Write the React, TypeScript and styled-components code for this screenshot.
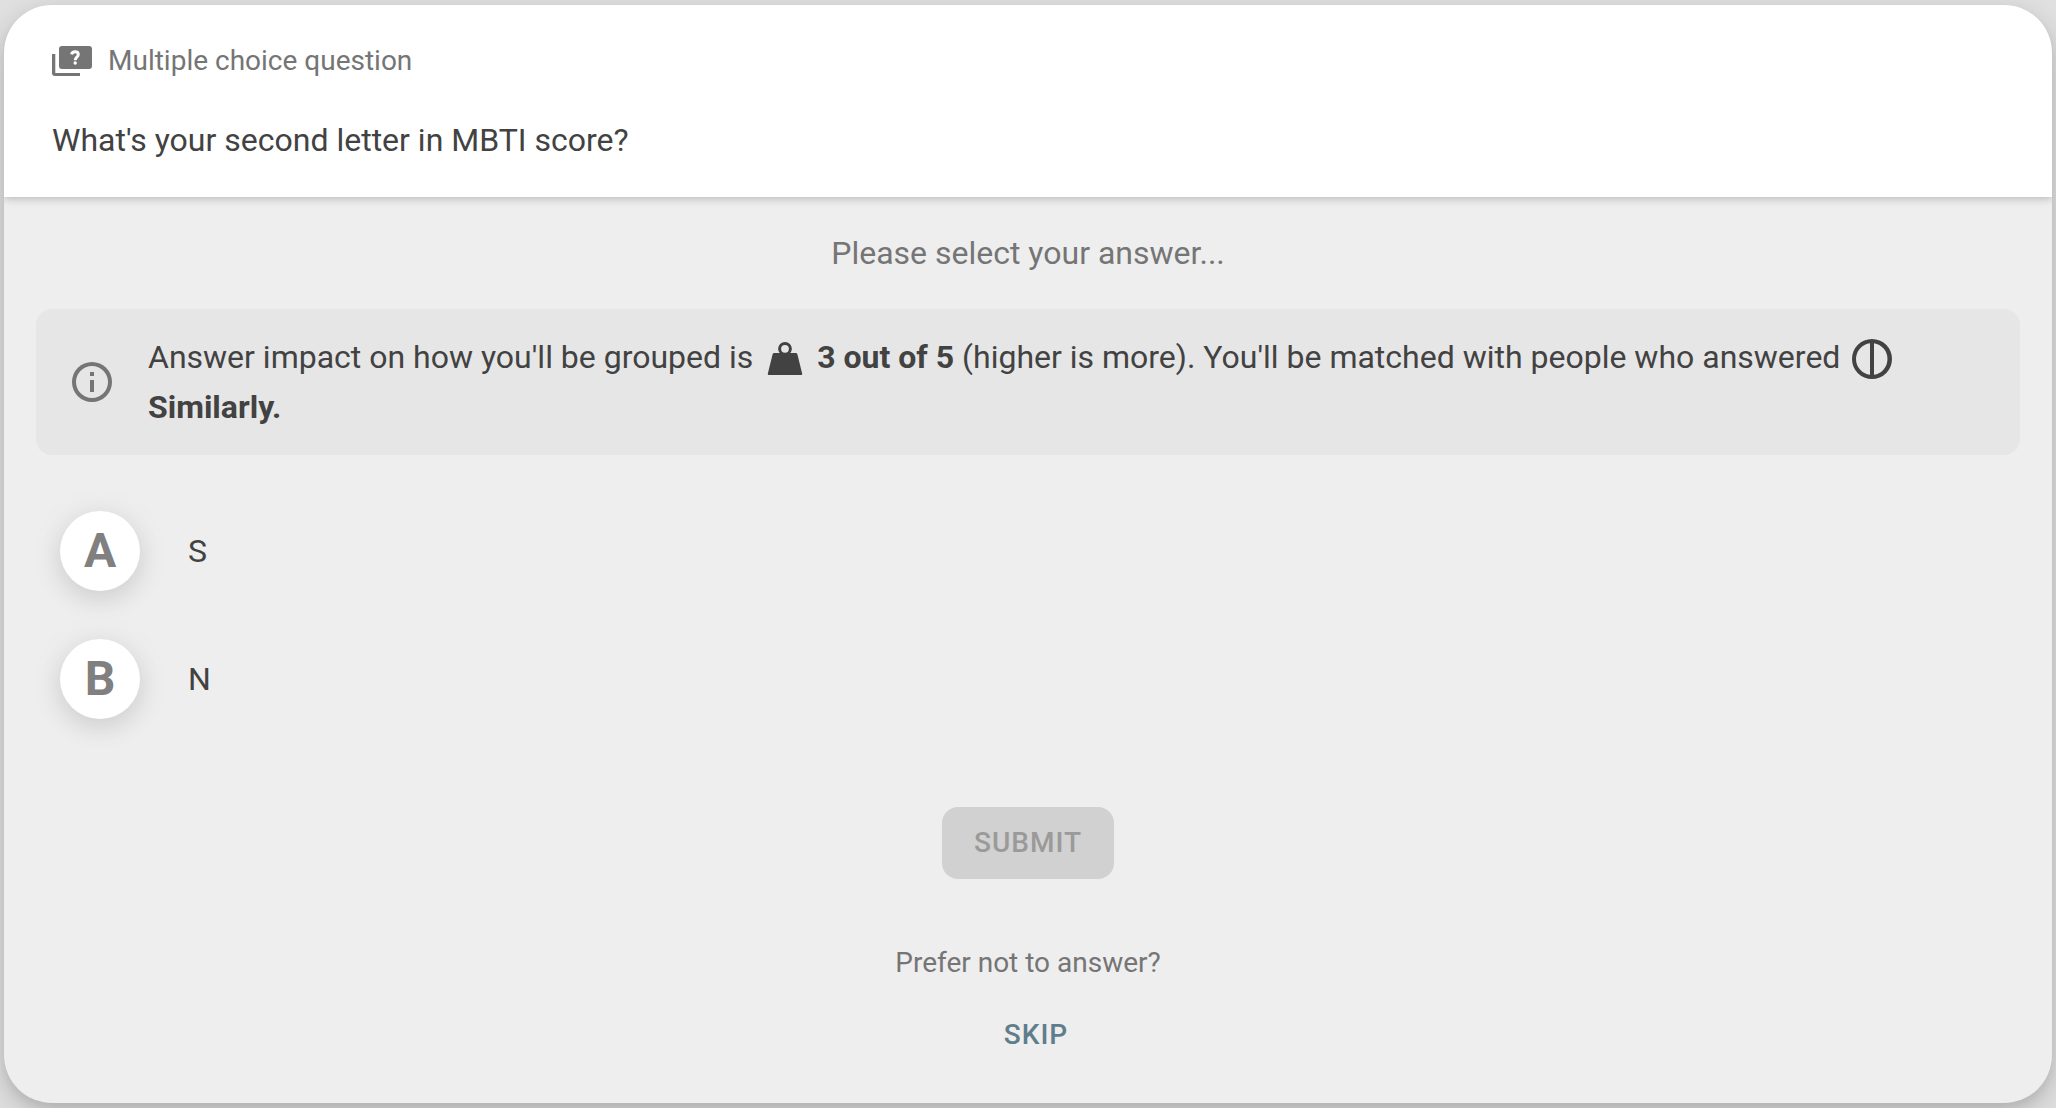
import React, { useState } from "react";
import styled, { createGlobalStyle } from "styled-components";

const GlobalStyle = createGlobalStyle`
  *, *::before, *::after { box-sizing: border-box; }
  body {
    margin: 0;
    background: #e0e0e0;
    color: #424242;
    font: 400 32px/50px Roboto, "Liberation Sans", sans-serif;
  }
`;

const Page = styled.div`
  display: flex;
  min-height: 100vh;
  padding: 5px 4px;
`;

const Card = styled.form`
  display: flex;
  flex: 1;
  flex-direction: column;
  overflow: hidden;
  border-radius: 48px;
  background: #eeeeee;
  box-shadow: 0 10px 28px rgba(0, 0, 0, 0.2), 0 4px 10px rgba(0, 0, 0, 0.05);
`;

const Header = styled.header`
  position: relative;
  display: flex;
  flex-direction: column;
  gap: 30px;
  padding: 32px 48px;
  background: #ffffff;
  box-shadow: 0 2px 8px rgba(0, 0, 0, 0.22);
`;

const Kind = styled.div`
  display: flex;
  align-items: center;
  gap: 16px;
  color: #757575;
  font-size: 28px;
  line-height: 48px;
`;

const Question = styled.h1`
  margin: 0;
  font-size: 32px;
  font-weight: 400;
  line-height: 50px;
`;

const Body = styled.main`
  display: flex;
  flex: 1;
  flex-direction: column;
  padding: 31px 32px 32px;
`;

const Prompt = styled.p`
  margin: 0 0 31px;
  color: #757575;
  text-align: center;
`;

const Notice = styled.aside`
  display: flex;
  align-items: center;
  gap: 32px;
  padding: 23px 32px;
  border-radius: 16px;
  background: #e6e6e6;
`;

const NoticeText = styled.p`
  margin: 0;
`;

const Icon = styled.svg<{ $tone?: string }>`
  flex: none;
  width: 48px;
  height: 48px;
  fill: ${(p) => p.$tone ?? "currentColor"};
`;

const InlineIcon = styled(Icon)`
  margin: -9px 0 -7px;
  vertical-align: middle;
`;

const Options = styled.fieldset`
  display: flex;
  flex-direction: column;
  gap: 48px;
  margin: 56px 24px 88px;
  padding: 0;
  border: 0;
`;

const Option = styled.label`
  display: flex;
  align-items: center;
  gap: 48px;
  cursor: pointer;
`;

const Radio = styled.input`
  position: absolute;
  opacity: 0;
`;

const Letter = styled.span<{ $selected: boolean }>`
  display: grid;
  place-items: center;
  width: 80px;
  height: 80px;
  border-radius: 50%;
  background: ${(p) => (p.$selected ? "#607d8b" : "#ffffff")};
  color: ${(p) => (p.$selected ? "#ffffff" : "#808080")};
  box-shadow: 0 8px 24px rgba(0, 0, 0, 0.1), 0 4px 40px rgba(0, 0, 0, 0.06);
  font-size: 48px;
  font-weight: 700;
`;

const Actions = styled.div`
  display: flex;
  flex-direction: column;
  align-items: center;
`;

const Button = styled.button`
  height: 72px;
  padding: 0 32px;
  border: 0;
  border-radius: 16px;
  background: #607d8b;
  color: #ffffff;
  font: 500 28px/40px Roboto, "Liberation Sans", sans-serif;
  letter-spacing: 1px;
  text-transform: uppercase;

  &:disabled {
    background: #d1d1d1;
    color: #9a9a9a;
  }
`;

const TextButton = styled(Button)`
  margin-left: 16px;
  background: transparent;
  color: #607d8b;
`;

const Decline = styled.p`
  margin: 61px 0 13px;
  color: #757575;
  font-size: 28px;
  line-height: 46px;
`;

const OPTIONS = [
  { letter: "A", text: "S" },
  { letter: "B", text: "N" },
];

export default function App() {
  const [choice, setChoice] = useState("");

  return (
    <>
      <GlobalStyle />
      <Page>
        <Card onSubmit={(e) => e.preventDefault()}>
          <Header>
            <Kind>
              <svg width="40" height="30" viewBox="0 0 40 30" fill="#757575" aria-hidden="true">
                <path d="M0 8h3.300v19H28v3H3a3 3 0 0 1-3-3z" />
                <path d="M10 0h27a3 3 0 0 1 3 3v17a3 3 0 0 1-3 3H10a3 3 0 0 1-3-3V3a3 3 0 0 1 3-3z" />
                <path
                  d="M19.500 8.400C19.900 6.600 21.300 5.700 23.100 5.700C25.100 5.700 26.300 6.900 26.300 8.500C26.300 11 23.200 11.200 23.200 14.200"
                  fill="none"
                  stroke="#ffffff"
                  strokeWidth="3"
                />
                <circle cx="23.200" cy="17" r="1.700" fill="#ffffff" />
              </svg>
              Multiple choice question
            </Kind>
            <Question>What's your second letter in MBTI score?</Question>
          </Header>
          <Body>
            <Prompt>Please select your answer...</Prompt>
            <Notice>
              <Icon viewBox="0 0 24 24" $tone="#757575" aria-hidden="true">
                <path d="M11 7h2v2h-2zm0 4h2v6h-2zm1-9a10 10 0 1 0 0 20 10 10 0 0 0 0-20zm0 18a8 8 0 1 1 0-16 8 8 0 0 1 0 16z" />
              </Icon>
              <NoticeText>
                Answer impact on how you'll be grouped is{" "}
                <InlineIcon viewBox="0 0 24 24" aria-hidden="true">
                  <circle cx="12" cy="6.900" r="2.700" fill="none" stroke="currentColor" strokeWidth="1.500" />
                  <path d="M6.600 9h10.800q.6 0 .8.600l2.400 9.800q.1.600-.5.600H3.900q-.6 0-.5-.6l2.400-9.800q.2-.6.800-.6z" />
                </InlineIcon>{" "}
                <b>3 out of 5</b> (higher is more). You'll be matched with people who answered{" "}
                <InlineIcon viewBox="0 0 24 24" aria-hidden="true">
                  <path d="M12 2a10 10 0 1 0 0 20 10 10 0 0 0 0-20zM4 12a8 8 0 0 1 7-7.900v15.800A8 8 0 0 1 4 12zm9 7.900V4.100a8 8 0 0 1 0 15.800z" />
                </InlineIcon>{" "}
                <b>Similarly.</b>
              </NoticeText>
            </Notice>
            <Options aria-label="Answers">
              {OPTIONS.map((o) => (
                <Option key={o.letter}>
                  <Radio
                    type="radio"
                    name="answer"
                    value={o.letter}
                    checked={choice === o.letter}
                    onChange={() => setChoice(o.letter)}
                  />
                  <Letter $selected={choice === o.letter}>{o.letter}</Letter>
                  {o.text}
                </Option>
              ))}
            </Options>
            <Actions>
              <Button type="submit" disabled={!choice}>
                Submit
              </Button>
              <Decline>Prefer not to answer?</Decline>
              <TextButton type="button">Skip</TextButton>
            </Actions>
          </Body>
        </Card>
      </Page>
    </>
  );
}
